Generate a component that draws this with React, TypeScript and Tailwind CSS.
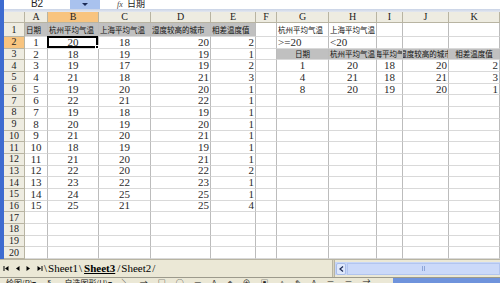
import { Fragment } from 'react';

type Cell = { t: string; a: 'l' | 'c' | 'r'; g?: boolean; cn?: boolean };

const letters = ['A', 'B', 'C', 'D', 'E', 'F', 'G', 'H', 'I', 'J', 'K'];

const main = [
    ['1', '20', '18', '20', '2'],
    ['2', '18', '19', '19', '1'],
    ['3', '19', '17', '19', '2'],
    ['4', '21', '18', '21', '3'],
    ['5', '19', '20', '20', '1'],
    ['6', '22', '21', '22', '1'],
    ['7', '19', '18', '19', '1'],
    ['8', '20', '19', '20', '1'],
    ['9', '21', '20', '21', '1'],
    ['10', '18', '19', '19', '1'],
    ['11', '21', '20', '21', '1'],
    ['12', '22', '20', '22', '2'],
    ['13', '23', '22', '23', '1'],
    ['14', '24', '25', '25', '1'],
    ['15', '25', '21', '25', '4'],
];

const picked = [
    ['1', '20', '18', '20', '2'],
    ['4', '21', '18', '21', '3'],
    ['8', '20', '19', '20', '1'],
];

const titles = ['日期', '杭州平均气温', '上海平均气温', '湿度较高的城市', '相差温度值'];
const numAlign: Cell['a'][] = ['c', 'c', 'c', 'r', 'r'];
const empty: Cell = { t: '', a: 'l' };

function buildRows(): Cell[][] {
    const rows: Cell[][] = [];
    for (let r = 1; r <= 20; r++) {
        const row: Cell[] = Array.from({ length: 11 }, () => empty);
        if (r === 1) {
            titles.forEach((t, i) => (row[i] = { t, a: 'l', g: true, cn: true }));
            row[6] = { t: '杭州平均气温', a: 'l', cn: true };
            row[7] = { t: '上海平均气温', a: 'l', cn: true };
        } else if (r <= 16) {
            main[r - 2].forEach((t, i) => (row[i] = { t, a: numAlign[i] }));
        }
        if (r === 2) {
            row[6] = { t: '>=20', a: 'l' };
            row[7] = { t: '<20', a: 'l' };
        }
        if (r === 3) titles.forEach((t, i) => (row[6 + i] = { t, a: 'c', g: true, cn: true }));
        if (r >= 4 && r <= 6) picked[r - 4].forEach((t, i) => (row[6 + i] = { t, a: numAlign[i] }));
        rows.push(row);
    }
    return rows;
}

const rows = buildRows();

function Tri({ dir, bar }: { dir: 'l' | 'r'; bar?: boolean }) {
    return (
        <svg width="7" height="7" viewBox="0 0 7 7">
            {dir === 'l' ? <path d="M5.5 1 L2 3.5 L5.5 6 Z" fill="#000" /> : <path d="M1.5 1 L5 3.5 L1.5 6 Z" fill="#000" />}
            {bar && (dir === 'l' ? <rect x="0.5" y="1" width="1" height="5" fill="#000" /> : <rect x="5.5" y="1" width="1" height="5" fill="#000" />)}
        </svg>
    );
}

export default function App() {
    return (
        <div className="w-[500px] h-[283px] overflow-hidden bg-white text-black flex flex-col">
            <div className="flex">
                <div className="w-[4px] bg-[#3d6bd0]" />
                <div className="flex-1 flex flex-col">
                    {/* formula bar */}
                    <div className="h-[9px] flex items-end overflow-hidden bg-white">
                        <div className="w-[66px] flex justify-center font-['Liberation_Sans',sans-serif] text-[10px] leading-[10px] text-[#222]">B2</div>
                        <div className="w-[30px] h-full bg-[#a9c2ee] flex justify-center items-center">
                            <svg width="6" height="4" viewBox="0 0 6 4"><path d="M0 0 H6 L3 3 Z" fill="#1b2a55" /></svg>
                        </div>
                        <div className="w-[17px]" />
                        <div className="w-[10px] font-['Liberation_Serif',serif] italic text-[8px] leading-[9px] text-[#444]">fx</div>
                        <div className="font-['Noto_Sans_CJK_SC',sans-serif] text-[9px] leading-[10px] text-[#222]">日期</div>
                    </div>
                    <div className="h-[3px] bg-gradient-to-b from-[#c9d3e6] to-[#e4e8f0]" />

                    {/* sheet grid */}
                    <div className="grid grid-cols-[21px_23px_51px_52px_60px_45px_21px_52px_48px_26px_46px_51px] grid-rows-[11px_14px_repeat(19,11.7px)]">
                        <div className="bg-[#eeece1] border-r border-b border-[#b8b4a2]" />
                        {letters.map((l) => (
                            <div
                                key={l}
                                className={`flex items-center justify-center border-r border-b border-[#b8b4a2] font-['Liberation_Serif',serif] text-[10px] leading-none text-[#222] ${l === 'B' ? 'bg-[#f8c47f]' : 'bg-[#eeece1]'}`}
                            >
                                {l}
                            </div>
                        ))}
                        {rows.map((row, ri) => (
                            <Fragment key={ri}>
                                <div
                                    className={`flex items-center justify-center border-r border-b border-[#b8b4a2] font-['Liberation_Serif',serif] text-[10px] leading-none text-[#222] ${ri === 1 ? 'bg-[#f8c47f]' : 'bg-[#eeece1]'}`}
                                >
                                    {ri + 1}
                                </div>
                                {row.map((c, ci) => (
                                    <div
                                        key={ci}
                                        className={`relative flex items-center whitespace-nowrap border-r border-b border-r-[#bcbcbc] border-b-[#d9d9d9] px-[1px] leading-none ${ri === 1 && ci === 1 ? 'overflow-visible' : 'overflow-hidden'} ${c.a === 'c' ? 'justify-center' : c.a === 'r' ? 'justify-end' : 'justify-start'} ${c.g ? 'bg-[#c0c0c0]' : ''} ${c.cn ? "font-['Noto_Sans_CJK_SC',sans-serif] text-[7.5px] text-[#111]" : "font-['Liberation_Serif',serif] text-[11px] text-[#2a2a2a]"}`}
                                    >
                                        {c.t}
                                        {ri === 1 && ci === 1 && (
                                            <div className="absolute -left-[1px] -top-[1px] -right-[0px] -bottom-[0px] border-2 border-black">
                                                <div className="absolute -right-[3px] -bottom-[3px] w-[4px] h-[4px] bg-black border border-white" />
                                            </div>
                                        )}
                                    </div>
                                ))}
                            </Fragment>
                        ))}
                    </div>
                </div>
            </div>

            {/* sheet tabs + scrollbar */}
            <div className="h-[18px] flex items-center bg-[#ebe8d6] border-t border-[#b8b4a2]">
                <div className="flex items-center gap-[4px] pl-[3px] w-[44px]">
                    <Tri dir="l" bar />
                    <Tri dir="l" />
                    <Tri dir="r" />
                    <Tri dir="r" bar />
                </div>
                <div className="flex items-center font-['Liberation_Serif',serif] text-[11px] leading-none w-[288px]">
                    <span>\</span>
                    <span className="px-[1px]">Sheet1</span>
                    <span>\</span>
                    <span className="px-[2px] underline font-bold">Sheet3</span>
                    <span>/</span>
                    <span className="px-[1px]">Sheet2</span>
                    <span>/</span>
                </div>
                <div className="w-[3px] h-full bg-[#d8d4c0] border-x border-[#b8b4a2]" />
                <div className="flex-1 h-[13px] flex items-center bg-[#c7d6f7]">
                    <div className="w-[10px] h-[12px] ml-[1px] rounded-[2px] bg-[#dfe8fc] border border-[#a9bde9] flex items-center justify-center">
                        <svg width="5" height="6" viewBox="0 0 5 6"><path d="M4 0.5 L1 3 L4 5.5" stroke="#1b2a55" strokeWidth="1.2" fill="none" /></svg>
                    </div>
                    <div className="flex-1 h-[12px] ml-[1px] bg-[#cbd9f9] border border-[#b2c5ef] flex items-center justify-center">
                        <div className="w-[3px] h-[5px] border-x border-[#8ea6d8]" />
                    </div>
                </div>
            </div>

            {/* drawing toolbar (cut off) */}
            <div className="flex-1 flex items-start overflow-hidden bg-[#ebe8d6] border-t border-[#9c9a8c]">
                <div className="w-[393px] flex items-start gap-[10px] pl-[6px] font-['Noto_Sans_CJK_SC',sans-serif] text-[8px] leading-[9px] text-[#222]">
                    <span>绘图(R)▾</span>
                    <span>↖</span>
                    <span>自选图形(U)▾</span>
                    <span>╲</span>
                    <span>→</span>
                    <span>□</span>
                    <span>○</span>
                    <span>▭</span>
                    <span>A</span>
                    <span>◈</span>
                    <span>⊕</span>
                    <span>▣</span>
                    <span>◬</span>
                    <span>✎</span>
                    <span>A</span>
                    <span>≡</span>
                    <span>≡</span>
                    <span>⇄</span>
                </div>
                <div className="flex-1 h-full bg-[#6f93dc]" />
            </div>
        </div>
    );
}
